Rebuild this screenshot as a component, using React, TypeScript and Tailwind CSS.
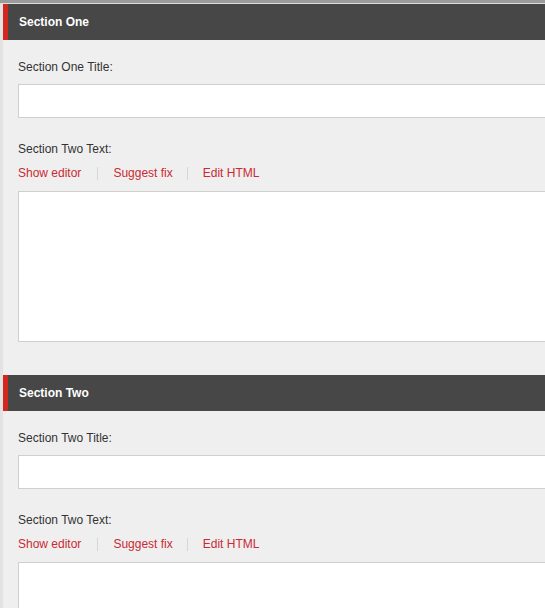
const font = { fontFamily: '"Liberation Sans", Arial, sans-serif' };

type SectionProps = {
  title: string;
  fieldLabel: string;
  textLabel: string;
  first?: boolean;
};

function Links() {
  return (
    <div className="flex items-center h-[14px] text-[12px] leading-[14px] text-[#c92a33]">
      <a className="pr-4 cursor-pointer">Show editor</a>
      <span className="w-px h-[13px] bg-[#d6d6d6]" />
      <a className="pl-[15px] pr-[14px] cursor-pointer">Suggest fix</a>
      <span className="w-px h-[13px] bg-[#d6d6d6]" />
      <a className="pl-[15px] cursor-pointer">Edit HTML</a>
    </div>
  );
}

function Section({ title, fieldLabel, textLabel, first }: SectionProps) {
  return (
    <section className={first ? "" : "mt-[33px]"}>
      <div className="h-9 flex items-center bg-[#474747] border-l-[5px] border-[#d3261c] pl-[11px]">
        <h2 className="text-white font-bold text-[12px]">{title}</h2>
      </div>
      <div className="pl-[15px] pt-5">
        <label className="block text-[12px] leading-[14px] text-[#333]">{fieldLabel}</label>
        <input className="block mt-[10px] h-[34px] w-[calc(100%+20px)] bg-white border border-[#cfcfcf] outline-none" />
        <label className="block mt-6 text-[12px] leading-[14px] text-[#333]">{textLabel}</label>
        <div className="mt-[10px]">
          <Links />
        </div>
        <textarea className="block mt-[11px] h-[151px] w-[calc(100%+20px)] bg-white border border-[#cfcfcf] outline-none resize-none" />
      </div>
    </section>
  );
}

export default function App() {
  return (
    <div style={font} className="w-full h-[608px] bg-[#efefef] overflow-hidden">
      <div className="h-[3px] bg-[#9b9b9b]" />
      <div className="h-px bg-[#dcdcdc]" />
      <div className="border-l-[3px] border-[#e2e2e2] min-h-[604px]">
        <Section first title="Section One" fieldLabel="Section One Title:" textLabel="Section Two Text:" />
        <Section title="Section Two" fieldLabel="Section Two Title:" textLabel="Section Two Text:" />
      </div>
    </div>
  );
}
